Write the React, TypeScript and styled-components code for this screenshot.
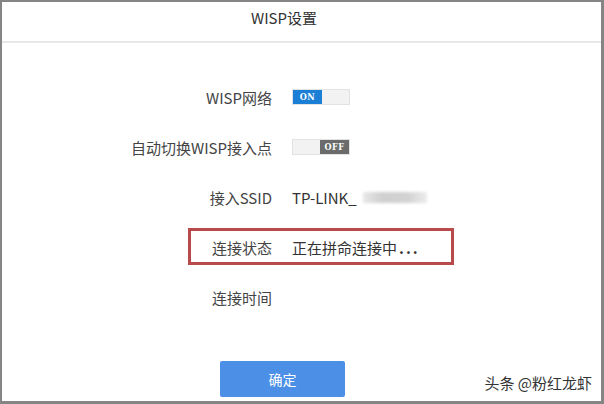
import styled, { createGlobalStyle } from "styled-components";

const GlobalStyle = createGlobalStyle`
  html, body {
    margin: 0;
    padding: 0;
    background: #ffffff;
  }
  body {
    font-family: "Noto Sans CJK SC", "Noto Sans", "Liberation Sans", sans-serif;
    color: #333333;
  }
`;

const rows = [
  { label: "WISP网络", kind: "on" },
  { label: "自动切换WISP接入点", kind: "off" },
  { label: "接入SSID", kind: "ssid" },
  { label: "连接状态", kind: "status" },
  { label: "连接时间", kind: "empty" },
];

const App = () => {
  return (
    <>
      <GlobalStyle />
      <Frame>
        <Header>
          <Title>WISP设置</Title>
        </Header>
        <Body>
          {rows.map((row) => (
            <Row key={row.label} $marked={row.kind === "status"}>
              <Label>{row.label}</Label>
              <Value>
                {row.kind === "on" && (
                  <Toggle>
                    <Knob $on>ON</Knob>
                    <Rest />
                  </Toggle>
                )}
                {row.kind === "off" && (
                  <Toggle>
                    <Rest />
                    <Knob>OFF</Knob>
                  </Toggle>
                )}
                {row.kind === "ssid" && (
                  <>
                    TP-LINK_
                    <Blur />
                  </>
                )}
                {row.kind === "status" && (
                  <>
                    正在拼命连接中<Dots>...</Dots>
                  </>
                )}
              </Value>
            </Row>
          ))}
          <Button>确定</Button>
        </Body>
        <Watermark>头条 @粉红龙虾</Watermark>
      </Frame>
    </>
  );
};

export default App;

const Frame = styled.div`
  position: relative;
  width: 604px;
  height: 404px;
  box-sizing: border-box;
  border-style: solid;
  border-color: #858585;
  border-width: 2px 3px 3px 2px;
  background: #ffffff;
  display: flex;
  flex-direction: column;
  overflow: hidden;
`;

const Header = styled.div`
  height: 39px;
  border-bottom: 2px solid #e8e8e8;
  display: flex;
  justify-content: center;
  padding-right: 35px;
`;

const Title = styled.div`
  font-size: 15px;
  line-height: 20px;
  margin-top: 6px;
  color: #333333;
`;

const Body = styled.div`
  padding-top: 29px;
  display: flex;
  flex-direction: column;
`;

const Row = styled.div<{ $marked?: boolean }>`
  position: relative;
  height: 50px;
  display: flex;
  align-items: center;
  gap: 20px;
  font-size: 15px;

  ${(p) =>
    p.$marked &&
    `
    &::after {
      content: "";
      position: absolute;
      left: 186px;
      top: 6px;
      width: 266px;
      height: 37px;
      box-sizing: border-box;
      border: 3px solid #b84a4c;
    }
  `}
`;

const Label = styled.div`
  width: 270px;
  text-align: right;
  color: #444444;
`;

const Value = styled.div`
  display: flex;
  align-items: center;
  color: #333333;
  white-space: nowrap;
`;

const Dots = styled.span`
  letter-spacing: 2px;
  margin-left: 2px;
  font-weight: bold;
`;

const Toggle = styled.div`
  width: 56px;
  height: 14px;
  display: flex;
  border: 1px solid #e2e2e2;
  background: #f2f2f2;
`;

const Knob = styled.div<{ $on?: boolean }>`
  width: 29px;
  background: ${(p) => (p.$on ? "#1b7fd6" : "#6b6b6b")};
  color: #ffffff;
  font-family: "DejaVu Serif Condensed", "Liberation Serif", serif;
  font-weight: bold;
  font-size: 9px;
  line-height: 14px;
  text-align: center;
  letter-spacing: 0.5px;
`;

const Rest = styled.div`
  flex: 1;
  background: #f2f2f2;
`;

const Blur = styled.div`
  width: 64px;
  height: 11px;
  margin-left: 6px;
  background: linear-gradient(90deg, #e8e8e8, #cfcfcf 30%, #d2d2d2 70%, #ececec);
  filter: blur(1.5px);
`;

const Button = styled.div`
  width: 125px;
  height: 36px;
  margin: 39px 0 0 218px;
  background: #4b8fe7;
  border-radius: 2px;
  color: #ffffff;
  font-size: 14px;
  display: flex;
  align-items: center;
  justify-content: center;
`;

const Watermark = styled.div`
  position: absolute;
  right: 9px;
  bottom: 8px;
  font-size: 15px;
  color: #333333;
  text-shadow: 0 0 2px #ffffff;
`;
